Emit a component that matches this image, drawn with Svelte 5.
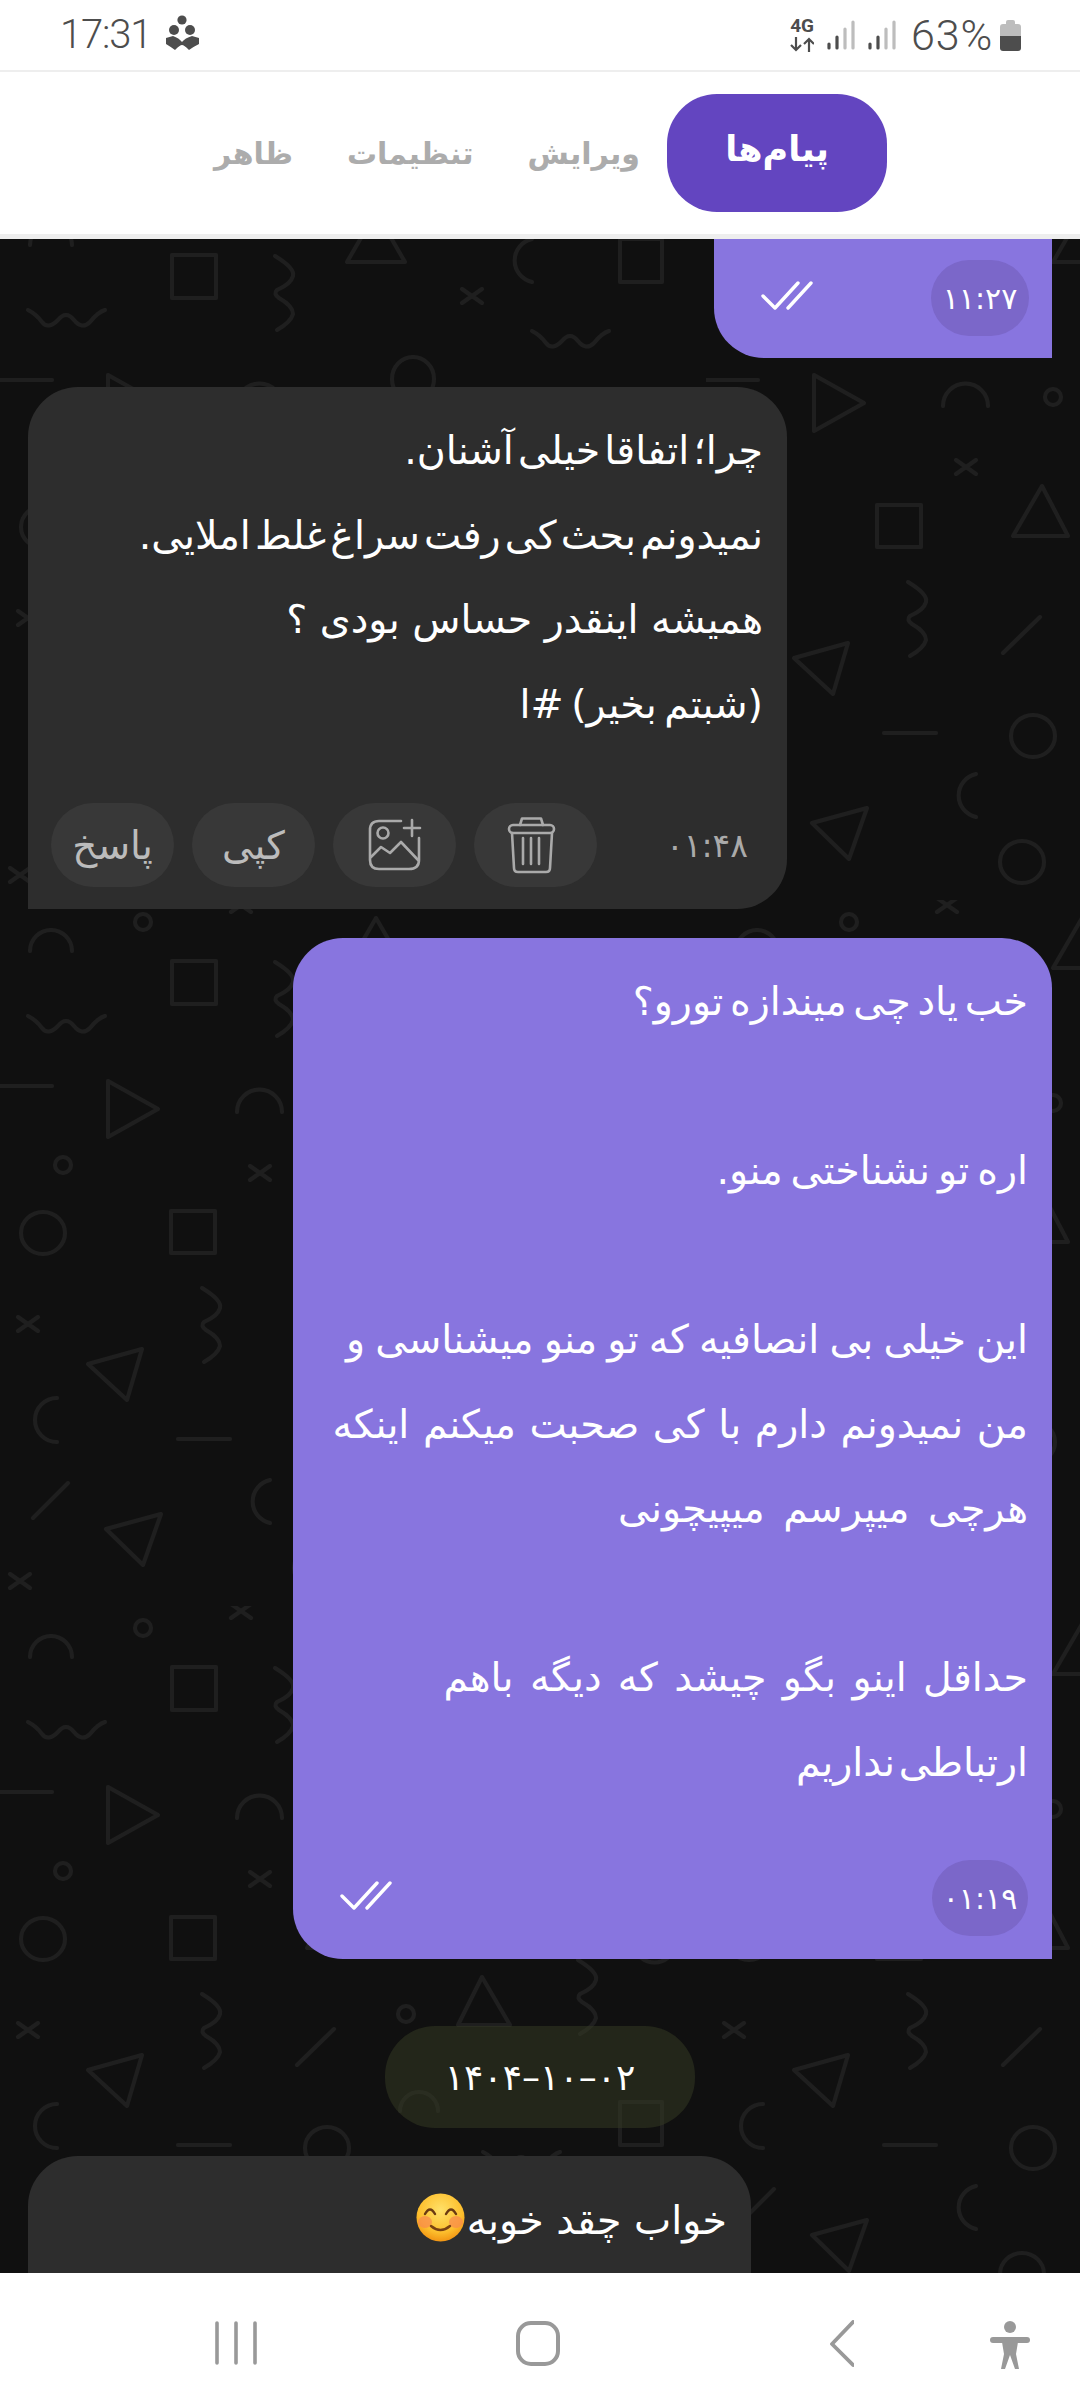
<script>
  const tabs = ['پیام‌ها', 'ویرایش', 'تنظیمات', 'ظاهر'];
  const first = [
    { t: 'چرا؛ اتفاقا خیلی آشنان.', ws: -8.5 },
    { t: 'نمیدونم بحث کی رفت سراغ غلط املایی.', ws: -8.4 },
    { t: 'همیشه اینقدر حساس بودی ؟', ws: 0 },
    { t: '(شبتم بخیر) #ا', ws: -5 }
  ];
  const second = [
    { t: 'خب یاد چی میندازه تورو؟', ws: -5.8 },
    { t: '', ws: 0 },
    { t: 'اره تو نشناختی منو.', ws: -4.6 },
    { t: '', ws: 0 },
    { t: 'این خیلی بی انصافیه که تو منو میشناسی و', ws: -2.4 },
    { t: 'من نمیدونم دارم با کی صحبت میکنم اینکه', ws: 1 },
    { t: 'هرچی میپرسم میپیچونی', ws: 6 },
    { t: '', ws: 0 },
    { t: 'حداقل اینو بگو چیشد که دیگه باهم', ws: 3.8 },
    { t: 'ارتباطی نداریم', ws: -9 }
  ];
</script>

<div class="app">
  <header class="status">
    <div class="cluster">
      <span class="clock">17:31</span>
      <svg class="notif" width="36" height="40" viewBox="0 0 36 40" fill="#4d4d4d">
        <circle cx="18" cy="5" r="4.6" /><circle cx="10" cy="15" r="5" /><circle cx="26" cy="15" r="5" />
        <path d="M2 23 L9 21 Q15 23 18 27 Q21 23 28 21 L35 23 V29 Q29 32 25 35 Q20 30 18 30 Q16 30 11 35 Q7 32 2 29 Z" />
      </svg>
    </div>
    <div class="cluster right">
      <div class="net">
        <span>4G</span>
        <svg width="24" height="15" viewBox="0 0 24 15" fill="none" stroke="#4d4d4d" stroke-width="2.2">
          <path d="M6 0 V13 M1 8 L6 13 L11 8 M19 15 V2 M14 7 L19 2 L24 7" />
        </svg>
      </div>
      {#each [0, 1] as s}
        <svg class="bars" width="28" height="30" viewBox="0 0 28 30" stroke-width="3.2" stroke-linecap="round">
          <path d="M2 24 V28" stroke="#4d4d4d" /><path d="M10 17 V28" stroke="#4d4d4d" />
          <path d="M18 9 V28" stroke="#bdbdbd" /><path d="M26 2 V28" stroke="#bdbdbd" />
        </svg>
      {/each}
      <span class="pct">63%</span>
      <svg width="21" height="32" viewBox="0 0 21 32">
        <path d="M6 5 V3 Q6 1 8 1 H13 Q15 1 15 3 V5 H18 Q21 5 21 8 V17 H0 V8 Q0 5 3 5 Z" fill="#bdbdbd" />
        <path d="M0 17 H21 V29 Q21 32 18 32 H3 Q0 32 0 29 Z" fill="#4d4d4d" />
      </svg>
    </div>
  </header>

  <nav class="tabs">
    {#each tabs as t, i}
      <button class="tab" class:active={i === 0}>{t}</button>
    {/each}
  </nav>

  <main class="chat">
    <svg class="pattern" width="1080" height="2034" aria-hidden="true">
      <defs>
        <path id="sq" d="M2 0 Q22 12 20 20 Q18 28 4 34 Q0 38 6 42 Q20 50 20 58 Q18 66 4 74" />
        <path id="wv" d="M0 2 Q8 6 14 14 Q20 22 30 12 Q38 2 46 12 Q54 22 62 14 Q70 4 77 2" />
        <path id="xx" d="M-10 -7 L10 7 M10 -7 L-10 7" />
        <pattern id="tile" x="0" y="661" width="706" height="706" patternUnits="userSpaceOnUse">
          <g transform="translate(0,-900)" fill="none" stroke="#1f1f1f" stroke-width="4" stroke-linecap="round" stroke-linejoin="round">
            <path d="M30 951 A21 21 0 0 1 72 951" />
            <path d="M237 1112 A22 22 0 0 1 282 1112" />
            <path d="M57 1398 A22 22 0 0 0 57 1442" />
            <path d="M270 1480 A22 22 0 0 0 270 1523" />
            <path d="M532 945 A22 22 0 0 0 532 988" />
            <path d="M634 1240 A21 21 0 0 0 675 1240" />
            <path d="M400 1405 A19 19 0 0 1 438 1405" />
            <circle cx="143" cy="922" r="8" />
            <circle cx="63" cy="1165" r="8" />
            <circle cx="347" cy="1103" r="8" />
            <circle cx="406" cy="1308" r="8" />
            <ellipse cx="43" cy="1233" rx="22" ry="21" />
            <ellipse cx="327" cy="1442" rx="22" ry="21" />
            <ellipse cx="316" cy="1568" rx="22" ry="21" />
            <ellipse cx="413" cy="1085" rx="21" ry="22" />
            <rect x="172" y="961" width="44" height="43" />
            <rect x="171" y="1211" width="44" height="42" />
            <rect x="620" y="945" width="42" height="43" />
            <rect x="620" y="1396" width="42" height="43" />
            <path d="M108 1081 L158 1109 L108 1137 Z" />
            <path d="M88 1364 L142 1349 L127 1400 Z" />
            <path d="M106 1529 L161 1514 L143 1565 Z" />
            <path d="M336 1192 L307 1242 L362 1242 Z" />
            <path d="M376 918 L347 968 L405 968 Z" />
            <path d="M482 1271 L458 1319 L510 1319 Z" />
            <path d="M0 1086 H52" />
            <path d="M178 1439 H230" />
            <path d="M33 1518 L68 1483" />
            <path d="M297 1359 L334 1323" />
            <use href="#wv" x="28" y="1014" />
            <use href="#wv" x="532" y="1035" />
            <use href="#wv" x="483" y="1444" />
            <use href="#sq" x="273" y="962" />
            <use href="#sq" x="200" y="1288" />
            <use href="#sq" x="576" y="1254" />
            <use href="#xx" x="260" y="1173" />
            <use href="#xx" x="28" y="1324" />
            <use href="#xx" x="20" y="1581" />
            <use href="#xx" x="241" y="905" />
            <use href="#xx" x="472" y="1002" />
          </g>
        </pattern>
      </defs>
      <rect width="1080" height="2034" fill="url(#tile)" />
    </svg>

    <section class="bubble mine top">
      <div class="foot">
        {@render ticks()}
        <span class="stamp wide">۱۱:۲۷</span>
      </div>
    </section>

    <section class="bubble theirs long">
      {#each first as l}<p class="line" style:word-spacing="{l.ws}px">{l.t}</p>{/each}
      <div class="actions">
        <button class="pill">پاسخ</button>
        <button class="pill">کپی</button>
        <button class="pill" aria-label="image">
          <svg width="60" height="60" viewBox="0 0 60 60" fill="none" stroke="#aaa" stroke-width="2.6" stroke-linecap="round" stroke-linejoin="round">
            <path d="M36 6 H14 Q5 6 5 15 V45 Q5 54 14 54 H44 Q54 54 54 45 V23" />
            <circle cx="18" cy="18" r="5.5" />
            <path d="M47 5 V21 M39 13 H55" />
            <path d="M6 42 L16 32 L25 38 L36 27 L53 45" />
          </svg>
        </button>
        <button class="pill" aria-label="delete">
          <svg width="60" height="60" viewBox="0 0 60 60" fill="none" stroke="#aaa" stroke-width="2.6" stroke-linecap="round" stroke-linejoin="round">
            <path d="M14 10 L16 3.500 H35 L37 10" />
            <rect x="3" y="10" width="45" height="8" rx="4" />
            <path d="M6 18 L8 53 Q8 57 12 57 H40 Q44 57 44 53 L46 18" />
            <path d="M17 23 V49 M25 23 V49 M33 23 V49" />
          </svg>
        </button>
        <span class="time">۰۱:۴۸</span>
      </div>
    </section>

    <section class="bubble mine big">
      {#each second as l}<p class="line" style:word-spacing="{l.ws}px">{l.t}</p>{/each}
      <div class="foot spaced">
        {@render ticks()}
        <span class="stamp">۰۱:۱۹</span>
      </div>
    </section>

    <div class="date">۱۴۰۴–۱۰–۰۲</div>

    <section class="bubble theirs last">
      <p class="line emoji-line">
        خواب چقد خوبه<svg class="emoji" width="49" height="49" viewBox="0 0 49 49">
          <defs>
            <radialGradient id="face" cx="50%" cy="35%" r="65%">
              <stop offset="0" stop-color="#ffe169" /><stop offset=".7" stop-color="#fdbf2d" /><stop offset="1" stop-color="#f29513" />
            </radialGradient>
          </defs>
          <circle cx="24.500" cy="24.500" r="24" fill="url(#face)" />
          <ellipse cx="9" cy="29" rx="7" ry="6" fill="#f8894e" opacity=".7" />
          <ellipse cx="40" cy="29" rx="7" ry="6" fill="#f8894e" opacity=".7" />
          <path d="M9 21 Q14 12 19 21 M30 21 Q35 12 40 21" fill="none" stroke="#6b3a12" stroke-width="2.4" stroke-linecap="round" />
          <path d="M15 33 Q24.500 41 34 33" fill="none" stroke="#7a4112" stroke-width="2.4" stroke-linecap="round" />
        </svg>
      </p>
    </section>
  </main>

  <footer class="nav">
    <svg class="n-recents" width="42" height="50" viewBox="0 0 42 50" stroke="#999" stroke-width="3.6" stroke-linecap="round">
      <path d="M2 3 V43 M21 3 V43 M40 3 V43" />
    </svg>
    <svg class="n-home" width="44" height="50" viewBox="0 0 44 50" fill="none" stroke="#999" stroke-width="4">
      <rect x="2" y="3" width="40" height="41" rx="13" />
    </svg>
    <svg class="n-back" width="24" height="50" viewBox="0 0 24 50" fill="none" stroke="#999" stroke-width="3.8" stroke-linecap="round" stroke-linejoin="round">
      <path d="M23 2 L2 24 L23 45" />
    </svg>
    <svg class="n-access" width="40" height="50" viewBox="0 0 40 50" fill="#999">
      <circle cx="20" cy="7" r="6" />
      <rect x="0" y="17" width="40" height="6" rx="3" />
      <path d="M12 22 H28 L26 34 L29 49 H25 L20 35 L15 49 H11 L14 34 Z" />
    </svg>
  </footer>
</div>

{#snippet ticks()}
  <svg class="ticks" width="52" height="30" viewBox="0 0 52 30" fill="none" stroke="#fff" stroke-width="3.4" stroke-linecap="round" stroke-linejoin="round">
    <path d="M2 16 L14 28 L37 3" />
    <path d="M27 28 L50 3" />
  </svg>
{/snippet}

<style>
  :global(body) { margin: 0; background: #fff; }
  .app {
    width: 1080px; height: 2408px; overflow: hidden;
    display: flex; flex-direction: column;
    font-family: "DejaVu Sans", "Noto Sans", sans-serif;
  }
  .status {
    height: 70px; box-sizing: border-box; flex: none;
    display: flex; justify-content: space-between; align-items: center;
    padding: 0 59px 0 60px;
    color: #4d4d4d;
    font-family: Roboto, sans-serif; font-weight: 300;
  }
  .cluster { display: flex; align-items: center; }
  .clock { font-size: 40px; letter-spacing: -1.2px; line-height: 70px; }
  .notif { margin-left: 13px; }
  .net { display: flex; flex-direction: column; align-items: center; margin-right: 13px; gap: 3px; }
  .net span { font: 700 19px/16px Roboto, sans-serif; }
  .bars { margin-right: 13px; }
  .pct { font-size: 43px; letter-spacing: .8px; line-height: 70px; margin: 0 7px 0 2px; }

  .tabs {
    flex: none; box-sizing: border-box;
    border-top: 2px solid #eee;
    display: flex; flex-direction: row-reverse; align-items: center;
    padding: 0 193px 0 0;
    height: 164px;
  }
  .tab {
    border: 0; background: none; padding: 0 27px; height: 118px; margin: 0;
    font: 700 30px "DejaVu Sans", sans-serif; color: #acacac; direction: rtl;
  }
  .tab.active { background: #6345c0; color: #fff; padding: 0 30px 8px; border-radius: 50px; width: 220px; font-size: 35px; }

  .chat {
    position: relative; flex: none; height: 2034px; overflow: hidden;
    background: #101010; border-top: 5px solid #eee;
    color: #fff; display: flex; flex-direction: column; align-items: flex-start;
  }
  .pattern { position: absolute; left: 0; top: 0; }

  .bubble { position: relative; box-sizing: border-box; flex: none; }
  .mine { background: #8875df; }
  .theirs { background: #2d2d2d; }
  .top { margin-left: 714px; width: 338px; height: 119px; padding: 21px 23px 0 47px; border-radius: 0 0 0 50px; }
  .long { margin: 29px 0 0 28px; width: 759px; height: 522px; padding: 21px 24px 0 23px; border-radius: 50px 50px 50px 0; }
  .big { margin: 29px 0 0 293px; width: 759px; height: 1021px; padding: 21px 24px 0 47px; border-radius: 50px 50px 0 50px; }
  .last { margin: 28px 0 0 28px; width: 723px; height: 200px; padding: 22px 24px 0; border-radius: 50px 50px 0 0; }

  .line {
    margin: 0; height: 84.5px; line-height: 84.5px;
    direction: rtl; text-align: right; font-size: 39.5px; white-space: nowrap;
  }
  .foot { display: flex; justify-content: space-between; align-items: center; height: 76px; }
  .foot.spaced { margin: 56px 0 0; }
  .ticks { margin-bottom: 7px; }
  .stamp {
    width: 96px; height: 76px; border-radius: 38px; background: #7b67c9;
    display: flex; align-items: center; justify-content: center; font-size: 30px; direction: ltr;
  }
  .stamp.wide { width: 98px; }

  .actions { display: flex; align-items: center; gap: 18px; margin-top: 57px; padding-right: 15px; }
  .pill {
    width: 123px; height: 84px; border: 0; border-radius: 42px; background: #383838; padding: 0;
    display: flex; align-items: center; justify-content: center;
    color: #bcbcbc; font: 39px "DejaVu Sans", sans-serif; direction: rtl;
  }
  .time { margin-left: auto; font-size: 33px; color: #aaa; direction: ltr; }

  .date {
    margin: 67px 0 0 385px; flex: none; width: 310px; height: 102px; border-radius: 50px;
    background: rgba(54, 60, 36, .5); position: relative;
    display: flex; align-items: center; justify-content: center;
    font-size: 36px; direction: ltr; font-weight: 500;
  }
  .emoji-line { display: flex; align-items: center; gap: 2px; justify-content: flex-start; }
  .emoji { flex: none; margin-top: -6px; }

  .nav { flex: none; height: 135px; background: #fff; display: flex; align-items: flex-start; padding: 47px 0 0 215px; box-sizing: border-box; }
  .n-home { margin-left: 259px; }
  .n-back { margin-left: 270px; }
  .n-access { margin-left: 136px; }
</style>
